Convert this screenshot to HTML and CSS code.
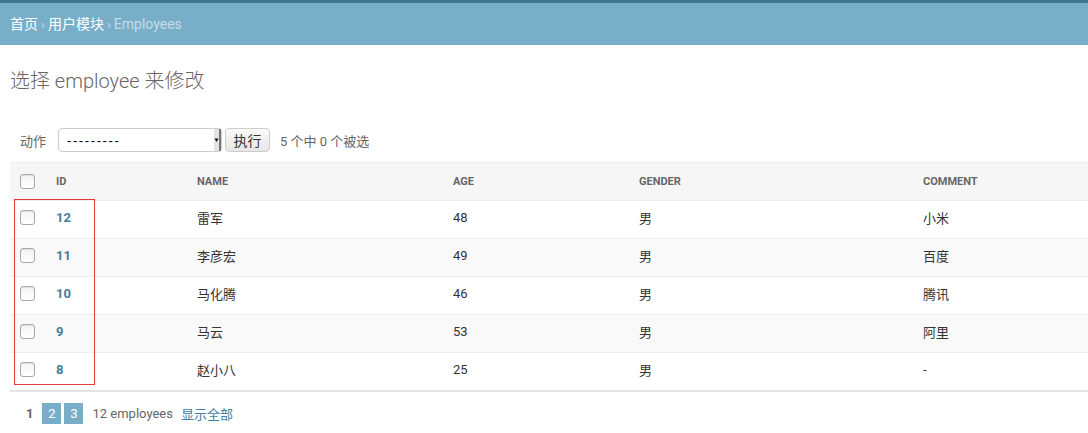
FILE: index.html
```html
<!DOCTYPE html>
<html lang="zh">
<head>
<meta charset="utf-8">
<title>选择 employee 来修改</title>
<link rel="stylesheet" href="styles.css">
</head>
<body>
<div class="topband"></div>
<div class="breadcrumbs">
  <a href="#">首页</a><span class="sep">›</span><a href="#">用户模块</a><span class="sep">›</span><span class="current">Employees</span>
</div>
<div class="content">
  <h1 class="title">选择 employee 来修改</h1>
  <div class="actions">
    <label class="action-label">动作</label>
    <span class="select-wrap">
      <select class="action-select"><option>---------</option></select>
      <svg class="select-arrow" width="8" height="22" viewBox="0 0 8 22"><rect x="1" y="0" width="6" height="22" fill="#e4e4e4"/><rect x="6" y="0" width="2" height="22" fill="#777"/><path d="M1.5 9.5 L5.5 9.5 L3.5 13 Z" fill="#111"/></svg>
    </span>
    <button class="go-btn" type="button">执行</button>
    <span class="action-counter">5 个中 0 个被选</span>
  </div>
  <div class="results">
    <table class="result-list">
      <colgroup>
        <col class="c-check"><col class="c-id"><col class="c-name"><col class="c-age"><col class="c-gender"><col class="c-comment">
      </colgroup>
      <thead>
        <tr>
          <th class="check-col"><input type="checkbox" class="cb"></th>
          <th>ID</th><th>NAME</th><th>AGE</th><th>GENDER</th><th>COMMENT</th>
        </tr>
      </thead>
      <tbody>
        <tr><td class="check-col"><input type="checkbox" class="cb"></td><td><a class="id-link" href="#">12</a></td><td>雷军</td><td>48</td><td>男</td><td>小米</td></tr>
        <tr class="alt"><td class="check-col"><input type="checkbox" class="cb"></td><td><a class="id-link" href="#">11</a></td><td>李彦宏</td><td>49</td><td>男</td><td>百度</td></tr>
        <tr><td class="check-col"><input type="checkbox" class="cb"></td><td><a class="id-link" href="#">10</a></td><td>马化腾</td><td>46</td><td>男</td><td>腾讯</td></tr>
        <tr class="alt"><td class="check-col"><input type="checkbox" class="cb"></td><td><a class="id-link" href="#">9</a></td><td>马云</td><td>53</td><td>男</td><td>阿里</td></tr>
        <tr><td class="check-col"><input type="checkbox" class="cb"></td><td><a class="id-link" href="#">8</a></td><td>赵小八</td><td>25</td><td>男</td><td>-</td></tr>
      </tbody>
    </table>
    <div class="highlight-box"></div>
  </div>
  <div class="paginator">
    <span class="this-page">1</span>
    <a class="page" href="#">2</a>
    <a class="page" href="#">3</a>
    <span class="count">12 employees</span>
    <a class="show-all" href="#">显示全部</a>
  </div>
</div>
</body>
</html>
```
FILE: styles.css
```css
html, body {
  margin: 0;
  padding: 0;
  overflow: hidden;
  background: #fff;
}
body {
  font-family: Roboto, "Noto Sans CJK SC", sans-serif;
  font-size: 13px;
  color: #333;
}
a { text-decoration: none; }

.topband {
  height: 3px;
  background: #417690;
}
.breadcrumbs {
  background: #79aec8;
  padding: 10px 10px;
  height: 22px;
  line-height: 22px;
  font-size: 14px;
  color: #c4dce8;
}
.breadcrumbs a { color: #fff; }
.breadcrumbs .sep {
  margin: 0 3px;
  color: #c4dce8;
  font-size: 13px;
}
.breadcrumbs .current { color: #c4dce8; }

.content {
  padding: 24px 0 0 10px;
}
.title {
  margin: 0;
  font-size: 20px;
  line-height: 24px;
  font-weight: 300;
  color: #666;
}
.actions {
  margin-top: 35px;
  height: 24px;
  display: flex;
  align-items: center;
  padding-left: 10px;
}
.action-label {
  color: #666;
  margin-right: 12px;
}
.select-wrap {
  position: relative;
  display: inline-block;
  height: 24px;
}
.action-select {
  appearance: none;
  -webkit-appearance: none;
  width: 164px;
  height: 24px;
  border: 1px solid #ccc;
  border-radius: 4px;
  background: #fff;
  font-family: "Liberation Sans", Arial, sans-serif;
  font-size: 13px;
  letter-spacing: 1.6px;
  color: #000;
  padding: 0 0 0 8px;
  margin: 0;
}
.select-arrow {
  position: absolute;
  right: 1px;
  top: 1px;
}
.go-btn {
  margin-left: 3px;
  height: 24px;
  width: 45px;
  border: 1px solid #ccc;
  border-radius: 4px;
  background: linear-gradient(#fafafa, #e6e6e6);
  font-family: Roboto, "Noto Sans CJK SC", sans-serif;
  font-size: 14px;
  color: #333;
  padding: 0;
}
.action-counter {
  margin-left: 10px;
  color: #666;
}

.results {
  position: relative;
  margin-top: 10px;
}
.result-list {
  border-collapse: collapse;
  table-layout: fixed;
  width: 1190px;
}
.c-check { width: 36px; }
.c-id { width: 141px; }
.c-name { width: 256px; }
.c-age { width: 186px; }
.c-gender { width: 284px; }
.c-comment { width: 287px; }

.result-list th {
  background: #f6f6f6;
  border-top: 1px solid #eee;
  border-bottom: 1px solid #eee;
  height: 37px;
  padding: 0 10px;
  text-align: left;
  font-size: 11px;
  font-weight: 700;
  color: #666;
  vertical-align: middle;
}
.result-list td {
  height: 32px;
  padding: 0 10px 5px;
  border-bottom: 1px solid #eee;
  vertical-align: middle;
  font-size: 13px;
  color: #333;
}
.result-list tr.alt td { background: #f9f9f9; }
.result-list tbody tr:last-child td { border-bottom: 2px solid #e4e4e4; }
.result-list .check-col {
  padding-left: 10px;
  padding-right: 0;
}
.cb {
  appearance: none;
  -webkit-appearance: none;
  width: 15px;
  height: 15px;
  margin: 0;
  border: 1px solid #a9a9a9;
  border-radius: 3px;
  background: linear-gradient(#f3f3f3, #fff);
  box-shadow: inset 0 1px 1px rgba(0,0,0,0.08);
  display: block;
}
.id-link {
  color: #447e9b;
  font-weight: 700;
}

.highlight-box {
  position: absolute;
  left: 4px;
  top: 37px;
  width: 79px;
  height: 184px;
  border: 1px solid #e53a3a;
  pointer-events: none;
}

.paginator {
  display: flex;
  align-items: center;
  margin-top: 11px;
  padding-left: 10px;
  height: 21px;
  font-size: 13px;
  color: #666;
}
.this-page {
  padding: 0 6px;
  font-weight: 700;
  color: #666;
  margin-right: 3px;
}
.page {
  display: inline-block;
  width: 19px;
  height: 21px;
  line-height: 21px;
  text-align: center;
  background: #79aec8;
  color: #fff;
  margin-right: 3px;
}
.count {
  margin-left: 6px;
  margin-right: 8px;
}
.show-all { color: #447e9b; }
```
